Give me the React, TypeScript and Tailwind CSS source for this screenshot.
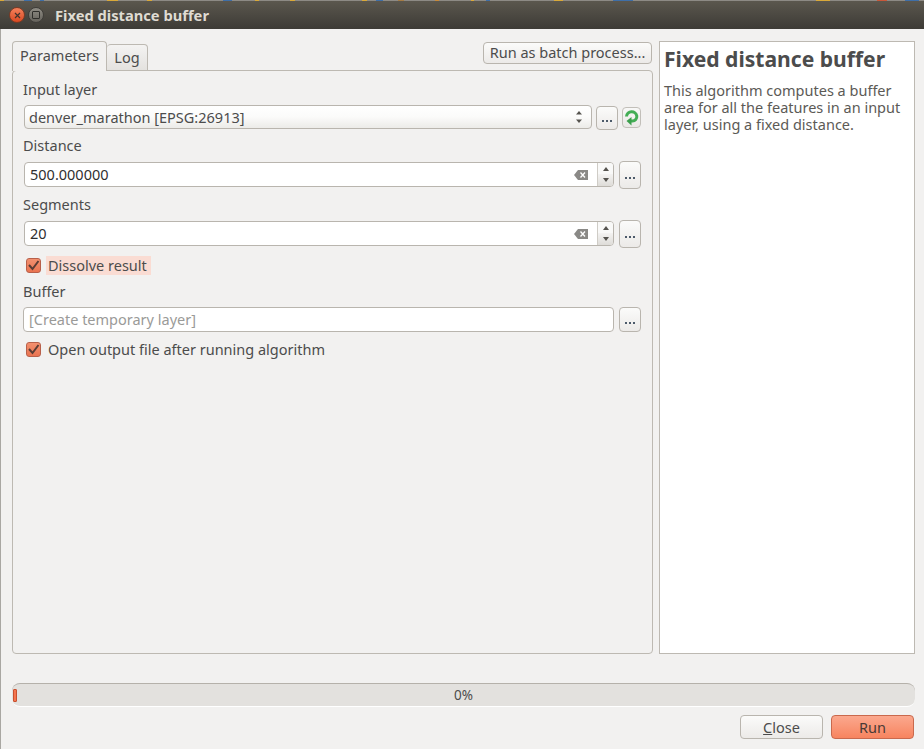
const font = "font-['Noto_Sans','Open_Sans',sans-serif]";

const specks: [number, number, string][] = [
  [0, 4, "#d9a93a"], [24, 8, "#3f6fa8"], [40, 4, "#3f6fa8"], [107, 11, "#d9a93a"], [147, 5, "#d9a93a"],
  [223, 9, "#3f6fa8"], [255, 4, "#d9a93a"], [290, 5, "#d9a93a"], [362, 5, "#d9a93a"], [376, 7, "#3f6fa8"],
  [398, 6, "#a57c45"], [435, 4, "#c98a3a"], [471, 3, "#d9a93a"], [486, 4, "#3f6fa8"], [554, 9, "#d9a93a"],
  [613, 20, "#3f6fa8"], [816, 14, "#d9a93a"], [877, 10, "#c9583a"], [905, 14, "#3f6fa8"],
];

function TopStrip() {
  return (
    <div className="h-[1px] shrink-0 flex bg-[#8d8a85]">
      {specks.map(([x, w, c], i) => (
        <span
          key={i}
          style={{ marginLeft: x - (i ? specks[i - 1][0] + specks[i - 1][1] : 0), width: w, backgroundColor: c }}
        />
      ))}
    </div>
  );
}

function Dots() {
  return (
    <span className="flex gap-[2px] mt-[6px]">
      <span className="w-[2px] h-[2px] bg-[#4c5a6a]" />
      <span className="w-[2px] h-[2px] bg-[#4c5a6a]" />
      <span className="w-[2px] h-[2px] bg-[#4c5a6a]" />
    </span>
  );
}

function DotsButton({ className }: { className: string }) {
  return (
    <div className={`w-[22px] shrink-0 rounded-[4px] border border-[#b9b5ae] bg-gradient-to-b from-[#fbfbfa] to-[#eceae8] flex items-center justify-center ${className}`}>
      <Dots />
    </div>
  );
}

function Arrows() {
  return (
    <svg width="8" height="14" viewBox="0 0 8 14" className="block">
      <path d="M4 1 L7 4.5 H1 Z" fill="#55534e" />
      <path d="M4 13 L7 9.5 H1 Z" fill="#55534e" />
    </svg>
  );
}

function NumberField({ value }: { value: string }) {
  return (
    <div className="flex items-start gap-[5px] ml-[1px]">
      <div className="flex-1 h-[25px] mt-[1px] flex rounded-[4px] border border-[#b9b5ae] bg-white overflow-hidden">
        <div className="flex-1 flex items-center justify-between pl-[5px] pr-[9px] text-[#2f2f2f]">
          <span>{value}</span>
          <svg width="14" height="10" viewBox="0 0 14 10">
            <path d="M4 0 H14 V10 H4 L0 5 Z" fill="#8a8986" />
            <path d="M6.5 2.5 L11 7.5 M11 2.5 L6.5 7.5" stroke="#fff" strokeWidth="1.3" />
          </svg>
        </div>
        <div className="w-[16px] border-l border-[#cfccc6] flex flex-col">
          <div className="h-[11px] flex items-center justify-center bg-[#f9f9f8]">
            <svg width="6" height="4" viewBox="0 0 6 4"><path d="M3 0 L6 4 H0 Z" fill="#55534e" /></svg>
          </div>
          <div className="flex-1 flex items-center justify-center bg-gradient-to-b from-[#f4f3f2] to-[#dedcd8]">
            <svg width="6" height="4" viewBox="0 0 6 4"><path d="M3 4 L6 0 H0 Z" fill="#55534e" /></svg>
          </div>
        </div>
      </div>
      <DotsButton className="h-[28px]" />
    </div>
  );
}

function Check() {
  return (
    <span className="w-[15px] h-[15px] rounded-[3px] border border-[#b8604a] bg-gradient-to-b from-[#f2906f] to-[#ea7350] flex items-center justify-center shrink-0">
      <svg width="13" height="13" viewBox="0 0 13 13">
        <path d="M2 6 L5.5 10 L11.5 2" stroke="#5a3c34" strokeWidth="2" fill="none" />
      </svg>
    </span>
  );
}

export default function App() {
  return (
    <div className={`w-[924px] h-[749px] bg-[#f2f1f0] flex flex-col overflow-hidden text-[#4c4c4c] text-[14.5px] leading-[19px] ${font}`}>
      <TopStrip />
      <div className="h-[28px] shrink-0 bg-gradient-to-b from-[#5b574e] to-[#3d3b36] flex items-center pl-[9px]">
        <span className="w-[16px] h-[16px] rounded-full bg-gradient-to-b from-[#f4805a] to-[#d9481f] border border-[#7c3a24] flex items-center justify-center">
          <svg width="7" height="7" viewBox="0 0 7 7"><path d="M1 1 L6 6 M6 1 L1 6" stroke="#41332c" strokeWidth="1.2" /></svg>
        </span>
        <span className="w-[16px] h-[16px] ml-[3px] rounded-full bg-gradient-to-b from-[#8f8c84] to-[#65625b] border border-[#3f3d39] flex items-center justify-center">
          <span className="w-[8px] h-[8px] border border-[#2f2e2a] rounded-[1px]" />
        </span>
        <span className="ml-[11px] text-[14.7px] font-bold text-[#dfdbd2]">Fixed distance buffer</span>
      </div>

      <div className="flex-1 flex flex-col border-l border-[#a9a7a2] pl-[11px] pr-[9px] pt-[12px]">
        <div className="h-[613px] flex gap-[6px] shrink-0">
          <div className="w-[641px] flex flex-col">
            <div className="h-[30px] flex justify-between items-start relative z-10">
              <div className="flex items-start">
                <div className="h-[30px] w-[95px] rounded-t-[4px] border border-b-0 border-[#bdb9b2] bg-[#f2f1f0] flex items-center justify-center pb-[3px]">Parameters</div>
                <div className="h-[27px] w-[41px] mt-[3px] rounded-t-[4px] border border-l-0 border-[#bdb9b2] bg-gradient-to-b from-[#f4f3f2] to-[#e4e2df] flex items-center justify-center">Log</div>
              </div>
              <div className="w-[169px] h-[22px] mt-[1px] mr-[1px] rounded-[4px] border border-[#b9b5ae] bg-gradient-to-b from-[#fbfbfa] to-[#eceae8] flex items-center justify-center pb-[1px]">Run as batch process...</div>
            </div>
            <div className="flex-1 -mt-[1px] rounded-[4px] border border-[#bdb9b2] pl-[10px] pr-[11px] pt-[9px]">
              <div className="h-[19px]">Input layer</div>
              <div className="flex items-start mt-[6px] ml-[1px]">
                <div className="flex-1 h-[24px] rounded-[4px] border border-[#b9b5ae] bg-gradient-to-b from-[#ffffff] via-[#fbfbfa] to-[#ecebe8] flex items-center justify-between pl-[4px] pr-[8px]">
                  <span>denver_marathon [EPSG:26913]</span>
                  <Arrows />
                </div>
                <DotsButton className="h-[24px] ml-[4px] mt-[1px]" />
                <div className="w-[19px] h-[21px] ml-[4px] mt-[2px] rounded-[4px] border border-[#c2bfb9] bg-gradient-to-b from-[#f8f8f7] to-[#eae8e6] flex items-center justify-center">
                  <svg width="15" height="16" viewBox="0 0 15 16">
                    <path d="M2.5 6.5 A5.2 5.2 0 0 1 12.8 6 A4.5 4.5 0 0 1 8.5 11 H6" fill="none" stroke="#43ad55" strokeWidth="3" />
                    <path d="M7.5 7 L2.5 11 L7.5 15.5 Z" fill="#3b9f4c" />
                  </svg>
                </div>
              </div>

              <div className="h-[19px] mt-[6px]">Distance</div>
              <div className="mt-[6px]"><NumberField value="500.000000" /></div>

              <div className="h-[19px] mt-[6px]">Segments</div>
              <div className="mt-[6px]"><NumberField value="20" /></div>

              <div className="flex items-center h-[19px] mt-[8px] ml-[3px]">
                <Check />
                <span className="ml-[5px] h-[19px] w-[105px] pl-[2px] bg-[#fadcd3] whitespace-nowrap">Dissolve result</span>
              </div>

              <div className="h-[19px] mt-[7px]">Buffer</div>
              <div className="flex items-start gap-[5px] mt-[6px]">
                <div className="flex-1 h-[25px] rounded-[4px] border border-[#b9b5ae] bg-white flex items-center pl-[5px] text-[#9a9a98]">[Create temporary layer]</div>
                <DotsButton className="h-[25px]" />
              </div>

              <div className="flex items-center h-[19px] mt-[8px] ml-[3px]">
                <Check />
                <span className="ml-[7px]">Open output file after running algorithm</span>
              </div>
            </div>
          </div>

          <div className="w-[256px] border border-[#bdb9b2] bg-white pl-[4px] pr-[6px] pt-[3px] text-[#5c5a56]">
            <h1 className="text-[21.1px] leading-[27px] font-bold text-[#4c4c4c]">Fixed distance buffer</h1>
            <p className="mt-[10px] leading-[17px]">This algorithm computes a buffer area for all the features in an input layer, using a fixed distance.</p>
          </div>
        </div>

        <div className="mt-[29px] h-[24px] w-[903px] shrink-0 rounded-[8px] border-t border-t-[#b5b1aa] border-b border-b-white bg-[#e3e1de] flex items-center relative">
          <span className="absolute left-[1px] top-[5px] w-[4px] h-[13px] rounded-[1px] border border-[#c9502f] bg-[#f4754f]" />
          <span className="w-full text-center text-[13.5px] pt-[1px]">0%</span>
        </div>

        <div className="flex justify-end gap-[8px] mt-[8px] w-[902px]">
          <div className="w-[83px] h-[24px] rounded-[4px] border border-[#b9b5ae] bg-gradient-to-b from-[#fbfbfa] to-[#eceae8] flex items-center justify-center"><span><span className="underline">C</span>lose</span></div>
          <div className="w-[83px] h-[24px] rounded-[4px] border border-[#c9694d] bg-gradient-to-b from-[#fba88e] to-[#f7845f] flex items-center justify-center text-[#4a3a35]">Run</div>
        </div>
      </div>
    </div>
  );
}
